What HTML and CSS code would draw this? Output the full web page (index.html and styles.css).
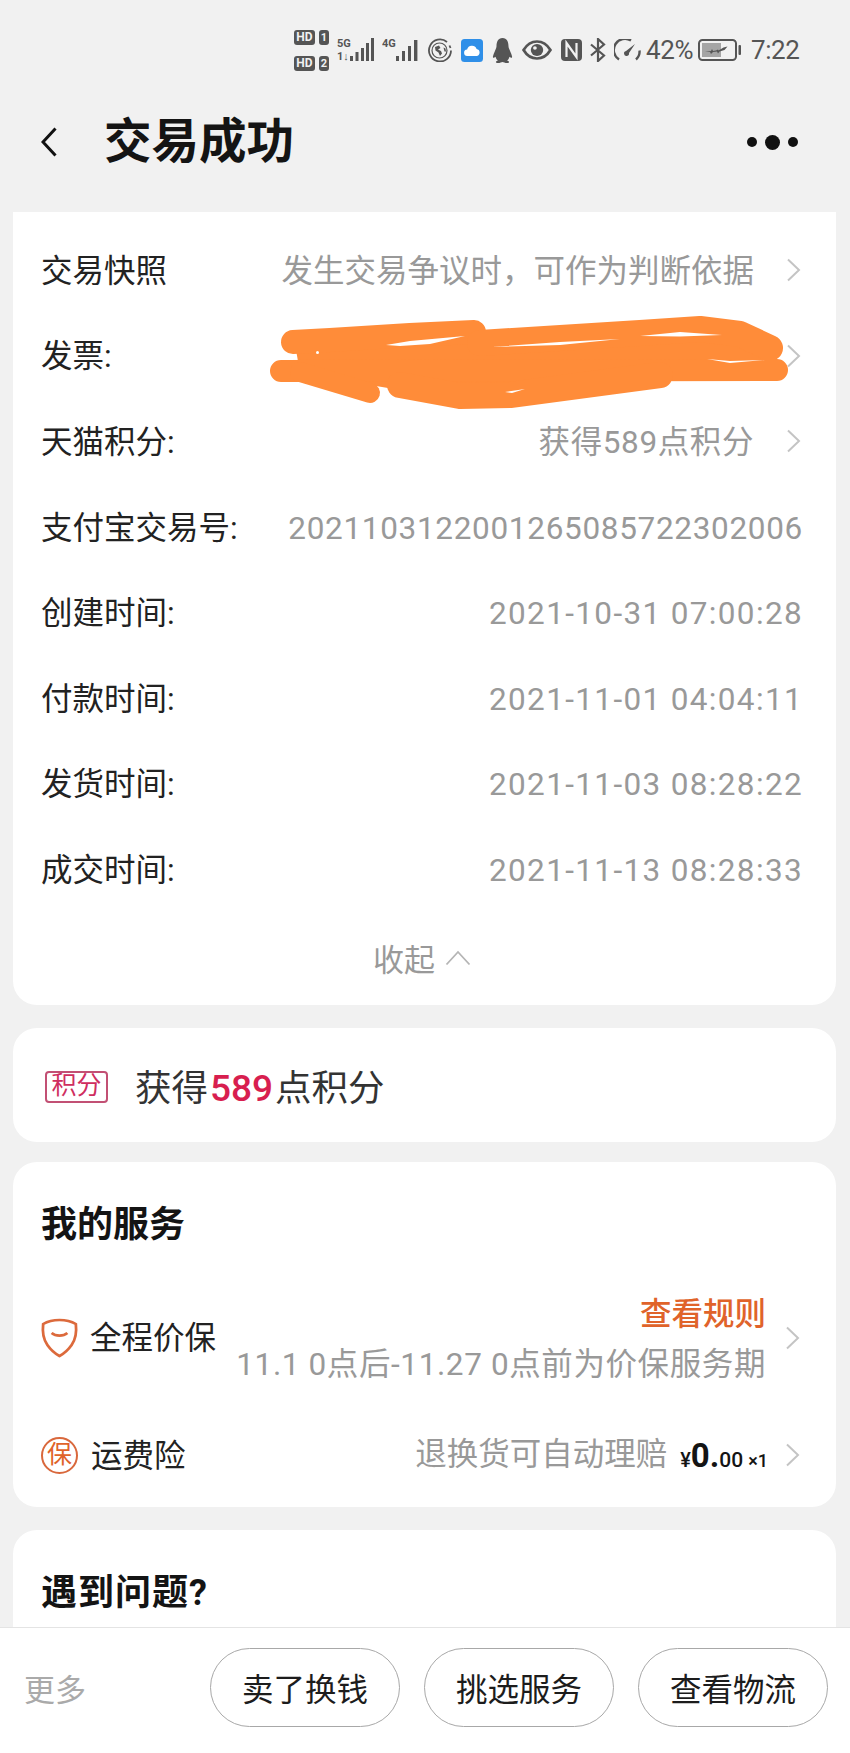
FILE: index.html
```html
<!DOCTYPE html>
<html lang="zh-CN">
<head>
<meta charset="utf-8">
<title>交易成功</title>
<link rel="stylesheet" href="styles.css">
</head>
<body>
<div class="page">
  <div class="status">
    <div class="hd">
      <div class="hd-line"><span class="hd-tag">HD</span><span class="hd-num">1</span></div>
      <div class="hd-line"><span class="hd-tag">HD</span><span class="hd-num">2</span></div>
    </div>
    <svg class="si" width="37" height="26" viewBox="0 0 37 26">
      <text x="0" y="10" class="si-tiny">5G</text>
      <text x="0" y="23" class="si-tiny">1↓</text>
      <rect x="13" y="19" width="3" height="5" class="si-f"/><rect x="18.500" y="15" width="3" height="9" class="si-f"/><rect x="24" y="11" width="3" height="13" class="si-f"/><rect x="29" y="6" width="3" height="18" class="si-f"/><rect x="34" y="1" width="3" height="23" class="si-f"/>
    </svg>
    <svg class="si" width="38" height="26" viewBox="0 0 38 26">
      <text x="0" y="10" class="si-tiny">4G</text>
      <rect x="14" y="19" width="3" height="5" class="si-f"/><rect x="20" y="14" width="3" height="10" class="si-f"/><rect x="26" y="9" width="3" height="15" class="si-f"/><rect x="32" y="3" width="3.400" height="21" class="si-f"/>
    </svg>
    <svg class="si si-loose" width="24" height="24" viewBox="0 0 24 24">
      <path d="M19 4A11 11 0 1 0 23 12.500" class="si-s-mid"/>
      <path d="M21.500 7.500l1 2.500" class="si-s-mid"/>
      <circle cx="11.500" cy="12.500" r="7.500" class="si-s-thin"/>
      <path d="M7 9l4-1.500 1.500 2.500-2.500 1.500 3 1.500 1 2.500-2 2.500-1.500-3.500-3-2z M15.500 9.500l2 1 .5 3h-1.500z" class="si-f"/>
    </svg>
    <svg class="si si-loose" width="22" height="23" viewBox="0 0 22 23">
      <rect width="22" height="23" rx="3.500" fill="#2f8fe8"/>
      <path d="M6.500 17a3.200 3.200 0 0 1-.4-6.400 5 5 0 0 1 9.500-.6 3.600 3.600 0 0 1 .4 7z" fill="#fff"/>
    </svg>
    <svg class="si si-loose" width="21" height="25" viewBox="0 0 21 24" preserveAspectRatio="none">
      <path d="M10.500 0C6 0 4.500 4 4.500 8 4.500 10 2 14 1 17.500 .5 19.500 2 19.500 3.500 18 4 20 5 21 6 21.500 3.500 22 3 24 6 24 8 24 9.500 23.200 10.500 23 11.500 23.200 13 24 15 24 18 24 17.500 22 15 21.500 16 21 17 20 17.500 18 19 19.500 20.500 19.500 20 17.500 19 14 16.500 10 16.500 8 16.500 4 15 0 10.500 0z" class="si-f"/>
    </svg>
    <svg class="si si-loose" width="30" height="20" viewBox="0 0 29 20" preserveAspectRatio="none">
      <path d="M1.500 10C5 4 9.500 1.500 14.500 1.500S24 4 27.500 10C24 16 19.500 18.500 14.500 18.500S5 16 1.500 10z" fill="none" stroke="#555" stroke-width="2.600"/>
      <circle cx="14.500" cy="10" r="6" class="si-f"/>
      <circle cx="12.500" cy="8" r="1.800" fill="#f1f1f1"/>
    </svg>
    <svg class="si" width="21" height="22" viewBox="0 0 21 22">
      <rect width="21" height="22" rx="4" class="si-f"/>
      <path d="M5.500 18V4l10 14V4" fill="none" stroke="#f1f1f1" stroke-width="2.200"/>
    </svg>
    <svg class="si" width="16" height="24" viewBox="0 0 16 24">
      <path d="M1 6.500l13 11-6 5.500V1l6 5.500-13 11" fill="none" stroke="#555" stroke-width="2.200"/>
    </svg>
    <svg class="si" width="27" height="22" viewBox="0 0 27 22">
      <path d="M5 20.500A10.500 10.500 0 0 1 17 1.500" class="si-s"/>
      <path d="M22 20.500a10.500 10.500 0 0 0 3.500-9" class="si-s"/>
      <path d="M21 5l-6 9a2.500 2.500 0 1 1-3-2z" class="si-f"/>
    </svg>
    <span class="pct">42%</span>
    <svg class="si" width="43" height="22" viewBox="0 0 43 22">
      <rect x="1" y="1" width="37" height="20" rx="3.500" fill="none" stroke="#555" stroke-width="2"/>
      <rect x="4" y="4" width="19" height="14" fill="#a5a5a5"/>
      <path d="M7 13l6-1 1-2 1 2 3-.5 2-1 .5 1 5-3 4-1-3 3.500-5 1.500-1.500 2-1-2-4 .5-2 2-1-2z" class="si-f"/>
      <rect x="40.500" y="6" width="2.500" height="10" rx="1" class="si-f"/>
    </svg>
    <span class="clock">7:22</span>
  </div>

  <header class="nav">
    <svg class="back" width="16" height="30" viewBox="0 0 16 30"><path d="M14.500 1.500L2 15l12.500 13.500" fill="none" stroke="#111" stroke-width="3"/></svg>
    <h1 class="nav-title">交易成功</h1>
    <div class="more"><i class="dot"></i><i class="dot dot-big"></i><i class="dot"></i></div>
  </header>

  <main class="content">
    <section class="card card-info">
      <div class="row"><span class="label">交易快照</span><span class="value">发生交易争议时&#65292;可作为判断依据</span><svg class="chev" width="15" height="24" viewBox="0 0 15 24"><path d="M2 1.500L13 12 2 22.500" /></svg></div>
      <div class="row"><span class="label">发票:</span><span class="value"></span><svg class="chev" width="15" height="24" viewBox="0 0 15 24"><path d="M2 1.500L13 12 2 22.500" /></svg></div>
      <div class="row"><span class="label">天猫积分:</span><span class="value value-mixed">获得589点积分</span><svg class="chev" width="15" height="24" viewBox="0 0 15 24"><path d="M2 1.500L13 12 2 22.500" /></svg></div>
      <div class="row"><span class="label">支付宝交易号:</span><span class="value value-num">2021103122001265085722302006</span></div>
      <div class="row"><span class="label">创建时间:</span><span class="value value-time">2021-10-31 07:00:28</span></div>
      <div class="row"><span class="label">付款时间:</span><span class="value value-time">2021-11-01 04:04:11</span></div>
      <div class="row"><span class="label">发货时间:</span><span class="value value-time">2021-11-03 08:28:22</span></div>
      <div class="row"><span class="label">成交时间:</span><span class="value value-time">2021-11-13 08:28:33</span></div>
      <div class="collapse"><span>收起</span><svg width="26" height="16" viewBox="0 0 26 16"><path d="M1.500 14.500L13 2l11.500 12.500" fill="none" stroke="#b5b5b5" stroke-width="1.800"/></svg></div>
    </section>

    <section class="card card-points">
      <span class="badge">积分</span>
      <span class="points">获得<b class="points-num">589</b>点积分</span>
    </section>

    <section class="card card-service">
      <h2 class="card-title">我的服务</h2>
      <div class="svc svc-tall">
        <svg class="svc-icon" width="39" height="40" viewBox="0 0 37 40" preserveAspectRatio="none"><path d="M18.500 2C13 2 7 3.500 3 6c-1 9 0 15 4 21 3 4.500 7 8.500 11.500 11 4.500-2.500 8.500-6.500 11.500-11 4-6 5-12 4-21-4-2.500-10-4-15.500-4z" fill="none" stroke="#dc6a3c" stroke-width="2.600"/><path d="M11 15c4 3.500 11 3.500 15 0" fill="none" stroke="#dc6a3c" stroke-width="2.600"/></svg>
        <span class="svc-name">全程价保</span>
        <div class="svc-right svc-stack">
          <div class="link">查看规则</div>
          <div class="value value-period">11.1 0点后-11.27 0点前为价保服务期</div>
        </div>
        <svg class="chev" width="15" height="24" viewBox="0 0 15 24"><path d="M2 1.500L13 12 2 22.500" /></svg>
      </div>
      <div class="svc svc-short">
        <span class="seal">保</span>
        <span class="svc-name svc-name-short">运费险</span>
        <div class="svc-right svc-inline">
          <span class="value">退换货可自动理赔</span>
          <span class="price"><span class="p-yen">¥</span><span class="p-int">0.</span><span class="p-dec">00</span><span class="p-qty">×1</span></span>
        </div>
        <svg class="chev" width="15" height="24" viewBox="0 0 15 24"><path d="M2 1.500L13 12 2 22.500" /></svg>
      </div>
    </section>

    <section class="card card-help">
      <h2 class="card-title card-title-wide">遇到问题?</h2>
    </section>
  </main>

  <footer class="bar">
    <span class="bar-more">更多</span>
    <a class="btn">卖了换钱</a>
    <a class="btn">挑选服务</a>
    <a class="btn">查看物流</a>
  </footer>

  <svg class="scribble" width="530" height="100" viewBox="265 312 530 100">
    <path class="scrib-body" d="M295 345L480 340 700 335 770 350 770 362 660 380 510 400 400 390 370 385 300 372z"/>
    <path class="scrib-stroke w24" d="M293 342L330 340 410 335 474 332"/>
    <path class="scrib-stroke w26" d="M480 343L640 333 700 329 740 334 770 348"/>
    <path class="scrib-stroke w22" d="M281 371L777 370"/>
    <path class="scrib-stroke w20" d="M370 393L300 372"/>
    <path class="scrib-stroke w26" d="M400 385L460 396 510 395 660 375"/>
    <path class="scrib-gap" d="M386 345L410 341 465 336 430 344 400 346zM492 347L560 342 620 339 560 345zM640 336L680 332 722 335 680 336.500zM707 359L730 361 765 360 730 363zM505 392L525 389 512 393zM316 352.500a1.500 1.500 0 1 0 3 0 1.500 1.500 0 1 0-3 0z"/>
  </svg>
</div>
</body>
</html>
```
FILE: styles.css
```css
* { box-sizing: border-box; }
html, body { margin: 0; padding: 0; }
body {
  font-family: Roboto, "Noto Sans CJK SC", sans-serif;
  color: #222;
  background: #f1f1f1;
}
.page {
  position: relative;
  width: 850px;
  height: 1753px;
  display: flex;
  flex-direction: column;
  overflow: hidden;
}

/* status bar */
.status {
  height: 90px;
  padding: 10px 51px 0 0;
  display: flex;
  justify-content: flex-end;
  align-items: center;
  gap: 8px;
  color: #555;
}
.si { flex: none; display: block; }
.si-loose { margin-right: 1px; }
.si-f { fill: #555; }
.si-s { fill: none; stroke: #555; stroke-width: 2.4; }
.si-s-mid { fill: none; stroke: #555; stroke-width: 1.8; }
.si-s-thin { fill: none; stroke: #555; stroke-width: 1.2; }
.si-tiny { font-family: Roboto, sans-serif; font-size: 11px; font-weight: 700; fill: #555; }
.hd { width: 35px; display: flex; flex-direction: column; gap: 11px; }
.hd-line { display: flex; justify-content: space-between; }
.hd-tag, .hd-num {
  height: 15px;
  border-radius: 3px;
  background: #555;
  color: #f1f1f1;
  font-size: 12px;
  font-weight: 700;
  line-height: 15px;
  text-align: center;
}
.hd-tag { width: 21px; }
.hd-num { width: 10px; font-size: 11px; }
.pct, .clock { font-size: 26px; line-height: 30px; }
.pct { width: 46px; margin: 0 -2px 0 -3px; letter-spacing: -.3px; }
.clock { width: 48px; margin-left: 2px; letter-spacing: -.4px; }

/* nav */
.nav {
  height: 122px;
  padding: 0 52px 18px 41px;
  display: flex;
  align-items: center;
}
.back { flex: none; }
.nav-title {
  margin: 0 0 0 47px;
  font-size: 47.500px;
  line-height: 60px;
  font-weight: 700;
  color: #141414;
}
.more { margin-left: auto; display: flex; align-items: center; gap: 8px; }
.dot { width: 10px; height: 10px; border-radius: 50%; background: #111; }
.dot-big { width: 15px; height: 15px; }

/* content */
.content {
  flex: 1;
  min-height: 0;
  overflow: hidden;
  padding: 0 14px 0 13px;
}
.card { background: #fff; border-radius: 24px; }
.card-info { padding: 17px 33px 0 28px; height: 793px; border-radius: 0 0 24px 24px; }
.row {
  height: 85.600px;
  display: flex;
  align-items: center;
}
.label { font-size: 31.500px; line-height: 44px; color: #222; white-space: nowrap; }
.value {
  font-size: 31.500px;
  line-height: 44px;
  color: #999;
  white-space: nowrap;
}
.row .value { margin-left: auto; }
.value-mixed { letter-spacing: .6px; }
.value-num { letter-spacing: .68px; }
.value-time { letter-spacing: 1.350px; }
.value-period { letter-spacing: .6px; }
.chev { flex: none; fill: none; stroke: #c4c4c4; stroke-width: 2; }
.row .chev { margin: 0 2px 3px 32px; }
.collapse {
  height: 88px;
  display: flex;
  align-items: center;
  justify-content: center;
  gap: 10px;
  font-size: 31px;
  color: #999;
}

.card-points {
  margin-top: 23px;
  height: 114px;
  padding: 4px 0 0 32px;
  display: flex;
  align-items: center;
}
.badge {
  width: 63px;
  height: 32px;
  border: 2px solid #c25074;
  border-radius: 4px;
  color: #cf2d5f;
  font-size: 25px;
  line-height: 26px;
  text-align: center;
}
.points { margin: 3px 0 0 27px; font-size: 36.500px; line-height: 44px; color: #333; }
.points-num { margin: 0 2px; font-size: 37px; font-weight: 500; color: #d81e4f; }

.card-service {
  margin-top: 20px;
  height: 345px;
  padding: 38px 36px 0 28px;
}
.card-title {
  margin: 0;
  font-size: 36px;
  line-height: 50px;
  font-weight: 700;
  color: #141414;
}
.card-title-wide { letter-spacing: 1px; }
.svc { display: flex; align-items: center; }
.svc-tall { height: 100px; margin-top: 38px; }
.svc-short { height: 80px; margin-top: 27px; }
.svc-icon { flex: none; margin-left: -1px; }
.svc-name { margin: 0 0 7px 11px; font-size: 31.500px; color: #222; white-space: nowrap; }
.svc-name-short { margin-bottom: 4px; }
.svc-right { margin-left: auto; text-align: right; }
.svc-stack { margin-top: 3px; }
.svc-right .link, .svc-right .value { line-height: 50px; }
.link { font-size: 31.500px; font-weight: 500; color: #e0632a; }
.svc .chev { margin-left: 19px; }
.seal {
  flex: none;
  width: 37px;
  height: 37px;
  margin-right: 2px;
  border: 2.500px solid #d9683c;
  border-radius: 50%;
  color: #e0632a;
  font-size: 25px;
  line-height: 31px;
  text-align: center;
}
.svc-inline { display: flex; align-items: center; gap: 13px; margin-right: -2px; }
.price { display: flex; align-items: baseline; color: #141414; font-weight: 500; }
.p-yen { font-size: 20px; }
.p-int { font-size: 33px; font-weight: 700; }
.p-dec { font-size: 21px; }
.p-qty { font-size: 18px; margin-left: 5px; }

.card-help {
  margin-top: 23px;
  height: 300px;
  padding: 38px 28px 0;
}

/* bottom bar */
.bar {
  flex: none;
  height: 126px;
  padding: 0 22px 7px 24px;
  display: flex;
  align-items: center;
  gap: 24px;
  background: #fff;
  border-top: 1px solid #e4e4e4;
}
.bar-more { margin-right: auto; font-size: 31px; color: #aaa; }
.btn {
  width: 190px;
  height: 79px;
  border: 1.500px solid #a8a8a8;
  border-radius: 40px;
  display: flex;
  align-items: center;
  justify-content: center;
  font-size: 31.500px;
  color: #1c1c1c;
}

/* redaction scribble drawn over the invoice row */
.scribble {
  position: absolute;
  left: 265px;
  top: 312px;
  pointer-events: none;
}
.scrib-body { fill: #ff8c39; }
.scrib-stroke { fill: none; stroke: #ff8c39; stroke-linecap: round; stroke-linejoin: round; }
.w20 { stroke-width: 20; }
.w22 { stroke-width: 22; }
.w24 { stroke-width: 24; }
.w26 { stroke-width: 26; }
.scrib-gap { fill: #fff; }
```
